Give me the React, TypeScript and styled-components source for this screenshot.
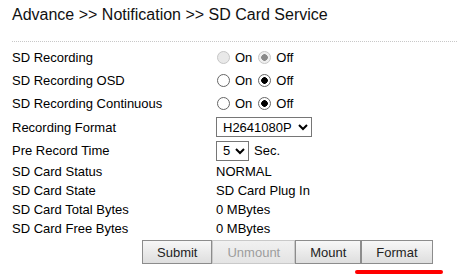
import React, { useState } from "react"
import styled, { createGlobalStyle } from "styled-components"

const GlobalStyle = createGlobalStyle`
  html, body {
    margin: 0;
    padding: 0;
    background: #fff;
  }
  body {
    font-family: "Liberation Sans", Arial, sans-serif;
    color: #000;
  }
`

const Page = styled.div`
  width: 458px;
  height: 278px;
  overflow: hidden;
  padding: 0 0 0 12px;
  box-sizing: border-box;
`

const Title = styled.div`
  font-size: 16px;
  line-height: 20px;
  padding-top: 5px;
  height: 27px;
  color: #111;
`

const Divider = styled.div`
  margin-top: 9px;
  margin-right: 1px;
  border-top: 1px dotted #c8c8c8;
`

const Form = styled.div`
  display: grid;
  grid-template-columns: 204px 1fr;
  margin-top: 4px;
  font-size: 13px;
`

const Label = styled.div<{ $h: number }>`
  height: ${({ $h }) => $h}px;
  display: flex;
  align-items: center;
  white-space: nowrap;
`

const Value = styled(Label)`
  gap: 0;
`

const Radio = styled.input.attrs({ type: "radio" })`
  appearance: none;
  box-sizing: border-box;
  width: 13px;
  height: 13px;
  margin: 0 5px 0 1px;
  border: 1px solid #666;
  border-radius: 50%;
  background: #fff;
  &:checked {
    background: radial-gradient(circle, #000 0 3px, #fff 3.6px);
  }
  &:disabled {
    border-color: #c6c6c6;
    background: #e9e9e9;
  }
  &:disabled:checked {
    background: radial-gradient(circle, #8a8a8a 0 3px, #efefef 3.6px);
  }
`

const RadioText = styled.span`
  margin-right: 5px;
`

const Select = styled.select<{ $w: number }>`
  width: ${({ $w }) => $w}px;
  height: 20px;
  font-family: "Liberation Sans", Arial, sans-serif;
  font-size: 13px;
  color: #000;
  border: 1px solid #767676;
  border-radius: 0;
  background: #fff;
  padding: 0 0 0 2px;
  margin: 0 5px 0 0;
`

const Buttons = styled.div`
  display: flex;
  margin: 2px 0 0 130px;
`

const Button = styled.button`
  height: 24px;
  padding: 0 14px;
  font-family: "Liberation Sans", Arial, sans-serif;
  font-size: 13px;
  color: #222;
  background: linear-gradient(#f7f7f7, #dedede);
  border: 1px solid #8c8c8c;
  border-radius: 0;
  margin: 0;
  &:disabled {
    color: #9d9d9d;
    background: linear-gradient(#f1f1f1, #e4e4e4);
    border-color: #c9c9c9;
  }
`

const Underline = styled.div`
  width: 88px;
  height: 4px;
  border-radius: 2px;
  background: #ff0000;
  margin: 6px 0 0 343px;
`

type Toggle = "on" | "off"

function OnOff(props: { name: string; value: Toggle; disabled?: boolean; onChange: (v: Toggle) => void }) {
  const { name, value, disabled, onChange } = props
  return (
    <>
      <Radio name={name} checked={value === "on"} disabled={disabled} onChange={() => onChange("on")} />
      <RadioText>On</RadioText>
      <Radio name={name} checked={value === "off"} disabled={disabled} onChange={() => onChange("off")} />
      <RadioText>Off</RadioText>
    </>
  )
}

export default function App() {
  const [rec, setRec] = useState<Toggle>("off")
  const [osd, setOsd] = useState<Toggle>("off")
  const [cont, setCont] = useState<Toggle>("off")
  const [format, setFormat] = useState("H2641080P")
  const [pre, setPre] = useState("5")

  const info = [
    ["SD Card Status", "NORMAL"],
    ["SD Card State", "SD Card Plug In"],
    ["SD Card Total Bytes", "0 MBytes"],
    ["SD Card Free Bytes", "0 MBytes"],
  ]

  return (
    <>
      <GlobalStyle />
      <Page>
        <Title>Advance &gt;&gt; Notification &gt;&gt; SD Card Service</Title>
        <Divider />
        <Form>
          <Label $h={23}>SD Recording</Label>
          <Value $h={23}><OnOff name="rec" value={rec} disabled onChange={setRec} /></Value>
          <Label $h={23}>SD Recording OSD</Label>
          <Value $h={23}><OnOff name="osd" value={osd} onChange={setOsd} /></Value>
          <Label $h={23}>SD Recording Continuous</Label>
          <Value $h={23}><OnOff name="cont" value={cont} onChange={setCont} /></Value>
          <Label $h={24}>Recording Format</Label>
          <Value $h={24}>
            <Select $w={96} value={format} onChange={e => setFormat(e.target.value)}>
              <option>H2641080P</option>
              <option>H264720P</option>
            </Select>
          </Value>
          <Label $h={23}>Pre Record Time</Label>
          <Value $h={23}>
            <Select $w={33} value={pre} onChange={e => setPre(e.target.value)}>
              {["0", "1", "2", "3", "4", "5"].map(v => <option key={v}>{v}</option>)}
            </Select>
            Sec.
          </Value>
          {info.map(([k, v]) => (
            <React.Fragment key={k}>
              <Label $h={19}>{k}</Label>
              <Value $h={19}>{v}</Value>
            </React.Fragment>
          ))}
        </Form>
        <Buttons>
          <Button>Submit</Button>
          <Button disabled>Unmount</Button>
          <Button>Mount</Button>
          <Button>Format</Button>
        </Buttons>
        <Underline />
      </Page>
    </>
  )
}
